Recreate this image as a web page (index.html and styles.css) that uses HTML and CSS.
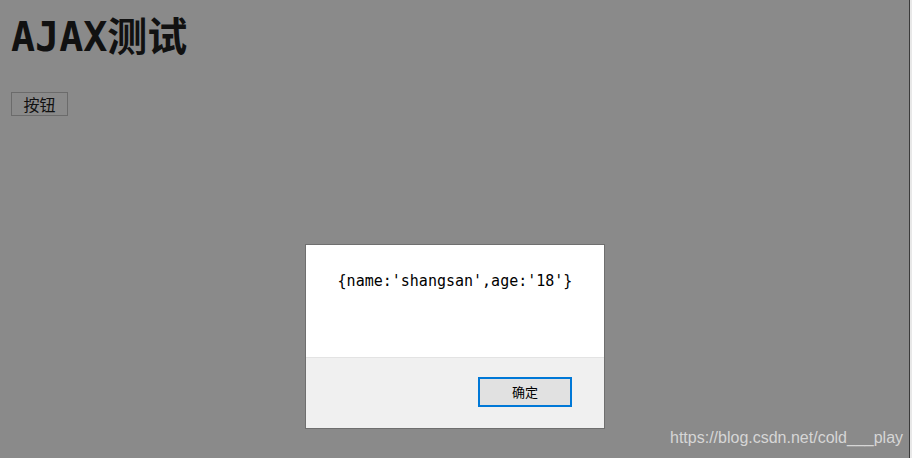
FILE: index.html
```
<!DOCTYPE html>
<html lang="zh">
<head>
<meta charset="utf-8">
<title>AJAX测试</title>
<link rel="stylesheet" href="styles.css">
</head>
<body>
<div class="page">
  <main class="main">
    <h1 class="title">AJAX测试</h1>
    <button class="btn" type="button">按钮</button>
  </main>
  <div class="edge"></div>
</div>
<div class="dialog">
  <div class="dialog-body">{name:'shangsan',age:'18'}</div>
  <div class="dialog-foot">
    <button class="ok" type="button">确定</button>
  </div>
</div>
<div class="watermark">https://blog.csdn.net/cold___play</div>
</body>
</html>
```
FILE: styles.css
```
html, body {
  margin: 0;
  padding: 0;
  height: 100%;
}
body {
  background: #8a8a8a;
  overflow: hidden;
  font-family: "Noto Sans CJK SC", sans-serif;
}
.page {
  display: flex;
  height: 458px;
}
.main {
  flex: 1;
  padding: 10px 0 0 11px;
}
.edge {
  width: 2px;
  background: #e8e8e8;
  border-left: 1px solid #3a3a3a;
}
.title {
  margin: 0;
  font-family: "DejaVu Sans Mono", "Noto Sans CJK SC", monospace;
  font-weight: bold;
  font-size: 40px;
  line-height: 54px;
  color: #111;
  letter-spacing: 0;
}
.btn {
  margin-top: 28px;
  width: 57px;
  height: 24px;
  padding: 0;
  background: #8a8a8a;
  border: 1px solid #6b6b6b;
  font-family: "Noto Sans CJK SC", sans-serif;
  font-size: 16px;
  line-height: 21px;
  color: #111;
}
.dialog {
  position: absolute;
  left: 305px;
  top: 244px;
  width: 298px;
  height: 183px;
  border: 1px solid #6f6f6f;
  background: #ffffff;
  display: flex;
  flex-direction: column;
}
.dialog-body {
  height: 113px;
  padding-top: 26px;
  box-sizing: border-box;
  text-align: center;
  font-family: "DejaVu Sans Mono", monospace;
  font-size: 15px;
  line-height: 20px;
  color: #000;
  border-bottom: 1px solid #e3e3e3;
}
.dialog-foot {
  flex: 1;
  background: #f0f0f0;
  display: flex;
  justify-content: flex-end;
  padding: 19px 32px 0 0;
  box-sizing: border-box;
}
.ok {
  width: 94px;
  height: 30px;
  padding: 0 0 2px 0;
  background: #e1e1e1;
  border: 2px solid #0078d7;
  font-family: "Noto Sans CJK SC", sans-serif;
  font-size: 13px;
  color: #000;
}
.watermark {
  position: absolute;
  left: 670px;
  top: 429px;
  font-family: "Liberation Sans", Arial, sans-serif;
  font-size: 16px;
  color: #d6d6d6;
}
```
